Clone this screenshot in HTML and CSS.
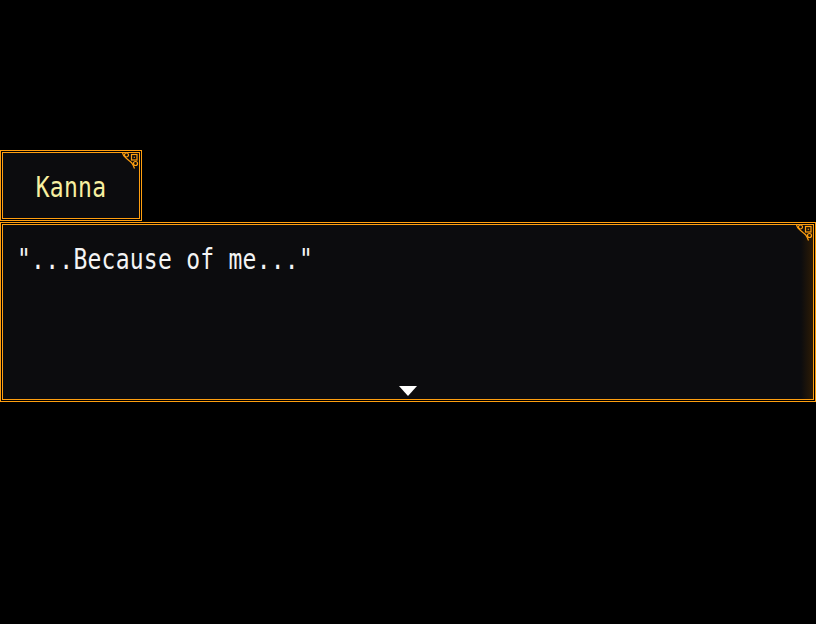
FILE: index.html
```html
<!DOCTYPE html>
<html>
<head>
<meta charset="utf-8">
<link rel="stylesheet" href="styles.css">
</head>
<body>
<div class="scene">
  <div class="window name-box">
    <svg class="ornament" width="18" height="17" viewBox="0 0 18 17">
      <path d="M0.5 0.5 Q1 4 4 6 L7.5 9 Q10 10.5 11 13 L12.5 16.5" fill="none" stroke="#ff9f10" stroke-width="1.2"/>
      <circle cx="4.5" cy="3" r="2" fill="none" stroke="#ff9f10" stroke-width="1.2"/>
      <rect x="9.5" y="2.5" width="5.5" height="5.5" fill="none" stroke="#ff9f10" stroke-width="1.2"/>
      <rect x="11.7" y="4.7" width="1.2" height="1.2" fill="#ff9f10"/>
      <circle cx="13.5" cy="11.5" r="2" fill="none" stroke="#ff9f10" stroke-width="1.2"/>
    </svg>
    <span class="name">Kanna</span>
  </div>
  <div class="window message-box">
    <svg class="ornament" width="18" height="17" viewBox="0 0 18 17">
      <path d="M0.5 0.5 Q1 4 4 6 L7.5 9 Q10 10.5 11 13 L12.5 16.5" fill="none" stroke="#ff9f10" stroke-width="1.2"/>
      <circle cx="4.5" cy="3" r="2" fill="none" stroke="#ff9f10" stroke-width="1.2"/>
      <rect x="9.5" y="2.5" width="5.5" height="5.5" fill="none" stroke="#ff9f10" stroke-width="1.2"/>
      <rect x="11.7" y="4.7" width="1.2" height="1.2" fill="#ff9f10"/>
      <circle cx="13.5" cy="11.5" r="2" fill="none" stroke="#ff9f10" stroke-width="1.2"/>
    </svg>
    <p class="line">"...Because of me..."</p>
    <div class="pause-arrow"></div>
  </div>
</div>
</body>
</html>
```
FILE: styles.css
```css
html, body {
  margin: 0;
  padding: 0;
  background: #000;
}
.scene {
  width: 816px;
  height: 624px;
  padding-top: 150px;
  box-sizing: border-box;
  display: flex;
  flex-direction: column;
  gap: 1px;
}
.window {
  position: relative;
  box-sizing: border-box;
  border: 1px solid #ff9f10;
  box-shadow: inset 0 0 0 1px #000, inset 0 0 0 2px #ff9f10;
  background: #0c0c0e;
}
.ornament {
  position: absolute;
  top: 1px;
  right: 1px;
}
.name-box {
  width: 142px;
  height: 71px;
  display: flex;
  justify-content: center;
  align-items: flex-start;
}
.name {
  display: inline-block;
  margin-top: 26px;
  font-family: "DejaVu Sans Mono", monospace;
  font-size: 23px;
  line-height: 27px;
  letter-spacing: 0.25px;
  color: #f8f0a0;
  transform: scaleY(1.25);
  transform-origin: center bottom;
}
.message-box {
  width: 816px;
  height: 180px;
  display: flex;
  flex-direction: column;
  background: linear-gradient(to right, #0c0c0e calc(100% - 14px), #2a1a06 calc(100% - 3px));
}
.line {
  margin: 26px 0 0 16px;
  font-family: "DejaVu Sans Mono", monospace;
  font-size: 23px;
  line-height: 27px;
  letter-spacing: 0.25px;
  color: #f4f4f4;
  transform: scaleY(1.25);
  transform-origin: left bottom;
}
.pause-arrow {
  margin: auto auto 5px auto;
  width: 0;
  height: 0;
  border-left: 9px solid transparent;
  border-right: 9px solid transparent;
  border-top: 10px solid #fff;
}
```
